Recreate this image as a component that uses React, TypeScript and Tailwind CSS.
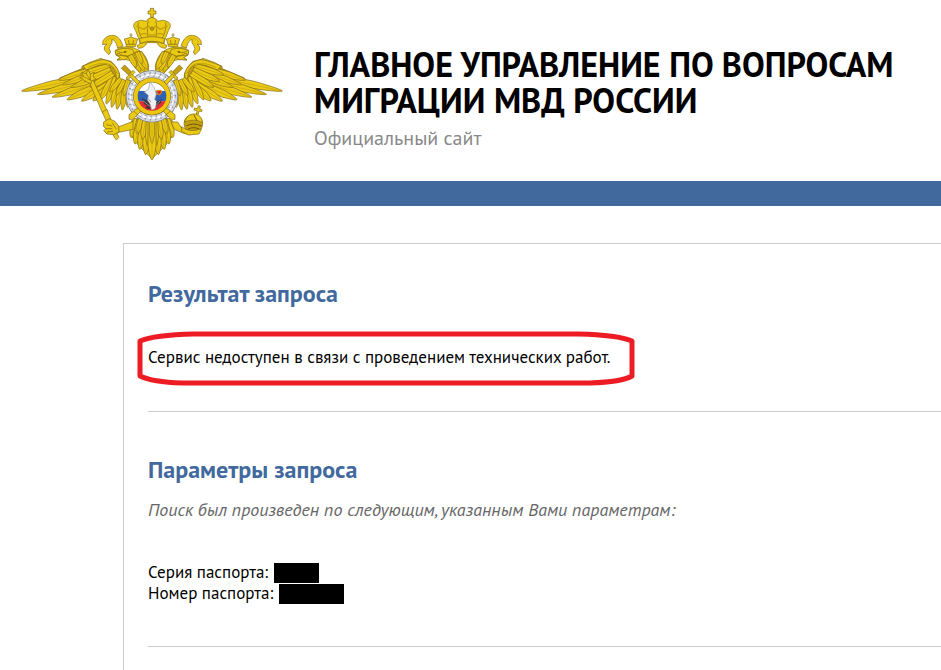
import type { ReactNode } from 'react';

const GOLD = '#ebca14';
const GOLD_DARK = '#c4a00e';
const INK = '#7d6716';

type Feather = [number, number, number, number, number];

// base x, base y, tip x, tip y, width
const primaries: Feather[] = [
  [262, 222, 20, 273, 22],
  [264, 234, 68, 283, 21],
  [266, 244, 112, 291, 21],
  [270, 250, 156, 299, 21],
  [278, 254, 200, 303, 20],
  [286, 256, 234, 302, 20],
];

const coverts: Feather[] = [
  [272, 200, 130, 240, 20],
  [274, 210, 142, 254, 18],
  [278, 220, 168, 262, 18],
  [262, 182, 202, 204, 16],
  [284, 198, 196, 224, 18],
  [288, 210, 208, 244, 18],
  [294, 220, 226, 262, 18],
];

const secondaries: Feather[] = [
  [296, 228, 256, 300, 18],
  [304, 232, 274, 312, 18],
  [312, 238, 290, 322, 18],
  [322, 242, 306, 328, 18],
  [332, 246, 322, 330, 17],
  [344, 250, 338, 322, 16],
  [318, 236, 284, 276, 14],
  [328, 240, 304, 286, 14],
  [340, 240, 326, 288, 14],
];

const tail: Feather[] = [
  [368, 358, 348, 412, 22],
  [376, 360, 360, 432, 22],
  [388, 362, 374, 448, 22],
  [398, 366, 392, 464, 22],
  [378, 356, 366, 402, 16],
  [392, 358, 382, 418, 17],
  [402, 360, 398, 436, 16],
];

const neck: Feather[] = [
  [352, 162, 376, 216, 18],
  [364, 156, 388, 214, 18],
  [372, 158, 398, 208, 18],
  [344, 164, 364, 202, 15],
  [366, 156, 382, 192, 14],
];

function featherPath([x1, y1, x2, y2, w]: Feather) {
  const len = Math.hypot(x2 - x1, y2 - y1);
  const nx = (-(y2 - y1) / len) * (w / 2);
  const ny = ((x2 - x1) / len) * (w / 2);
  const mx = x1 + (x2 - x1) * 0.65;
  const my = y1 + (y2 - y1) * 0.65;
  return `M${x1 + nx} ${y1 + ny}L${mx + nx} ${my + ny}Q${x2 + nx * 0.4} ${y2 + ny * 0.4} ${x2} ${y2}Q${x2 - nx * 0.4} ${y2 - ny * 0.4} ${mx - nx} ${my - ny}L${x1 - nx} ${y1 - ny}Z`;
}

function Feathers({ items }: { items: Feather[] }) {
  return (
    <>
      {items.map((f) => (
        <g key={f.join()}>
          <path d={featherPath(f)} fill={GOLD} stroke={INK} strokeWidth="2" />
          <path d={`M${f[0]} ${f[1]}L${f[2]} ${f[3]}`} stroke={GOLD_DARK} strokeWidth="2" />
        </g>
      ))}
    </>
  );
}

function Wing() {
  return (
    <g>
      <path
        d="M262 178L202 198L200 206L134 234L128 242L205 262L290 280L345 300L345 240L314 244L314 222L303 200L288 184Z"
        fill={GOLD_DARK}
        stroke={INK}
        strokeWidth="2"
      />
      <Feathers items={primaries} />
      <Feathers items={secondaries} />
      <Feathers items={coverts} />
      <path
        d="M204 198Q240 182 262 179Q288 180 300 198Q316 212 312 234L304 236Q304 212 290 200Q276 190 252 196L214 210Z"
        fill={GOLD}
        stroke={INK}
        strokeWidth="2"
      />
      <path d="M220 202Q262 182 286 194Q302 204 308 222" fill="none" stroke={GOLD_DARK} strokeWidth="3" />
    </g>
  );
}

function Head() {
  return (
    <g stroke={INK} strokeWidth="2" strokeLinejoin="round">
      {/* ribbon */}
      <path
        d="M324 138Q316 112 300 107Q278 102 264 122L263 134L276 132Q264 140 268 150L282 164L287 156Q278 146 286 136Q295 126 290 119Q302 118 308 144Z"
        fill={GOLD}
      />
      <path d="M270 126Q284 108 304 116" fill="none" stroke={GOLD_DARK} />
      {/* head and neck */}
      <path
        d="M378 222Q358 206 348 182L326 178L306 180L316 172L304 164L300 152L312 144Q340 136 362 146Q388 156 396 180Q404 196 400 214Z"
        fill={GOLD}
      />
      <Feathers items={neck} />
      <path d="M301 153Q322 140 352 148L358 160L338 168L322 166L312 160L302 164Z" fill={GOLD} />
      <path d="M303 165L322 167L340 170L330 179L306 180L316 173Z" fill={GOLD} />
      <path d="M306 155L322 158L336 154" fill="none" />
      <circle cx="330" cy="156" r="2" fill="#3d320c" />
      {/* small crown */}
      <path d="M335 140L328 117L340 114L348 110L356 114L368 117L361 140Z" fill={GOLD} />
      <path d="M348 110V99M343 105H353M340 120L343 134M356 120L353 134M334 133H362" fill="none" />
    </g>
  );
}

function Mirrored({ children }: { children: ReactNode }) {
  return (
    <>
      {children}
      <g transform="translate(822 0) scale(-1 1)">{children}</g>
    </>
  );
}

function Sword() {
  return (
    <g stroke={INK} strokeWidth="2">
      <path d="M319 205L329 195L349 215L340 224Z" fill={GOLD_DARK} />
      <path d="M333 234L354 211L360 217L340 238Z" fill={GOLD} />
      <path d="M350 222L375 246L368 254L344 229Z" fill={GOLD} />
      <path d="M342 344L374 319L383 328L354 358L342 358Z" fill={GOLD} />
      <path d="M357 334L370 346" fill="none" />
    </g>
  );
}

function Emblem() {
  return (
    <svg viewBox="0 0 825 510" role="img" aria-label="Герб МВД России" className="w-[275px] shrink-0">
      <Mirrored>
        <Wing />
        <Head />
      </Mirrored>

      {/* ribbon ties and the main crown */}
      <g stroke={INK} strokeWidth="2" strokeLinejoin="round">
        <path d="M374 116Q380 132 366 137L370 145Q390 144 396 128H426Q432 144 452 145L456 137Q442 132 448 116Z" fill={GOLD} />
        <path d="M374 124L362 92Q350 74 362 66Q376 56 394 64Q398 54 411 52Q424 54 428 64Q446 56 460 66Q472 74 460 92L448 124L446 130Q411 118 376 130Z" fill={GOLD} />
        <path d="M400 118Q394 82 400 62M422 118Q428 82 422 62M382 118Q366 90 370 68M440 118Q456 90 452 68" fill="none" />
        <path d="M364 78L386 88L400 78L411 88L422 78L436 88L458 78M374 104L388 100L411 106L434 100L448 104" fill="none" stroke={GOLD_DARK} strokeWidth="4" />
        <path d="M373 116Q411 104 449 116L446 130Q411 118 376 130Z" fill={GOLD} />
        <circle cx="411" cy="86" r="5" fill={GOLD_DARK} />
        <path d="M407 52V42H399V33H406V25H416V33H423V42H415V52Z" fill={GOLD} />
      </g>

      {/* tail */}
      <path d="M350 362Q411 336 472 362L474 406L448 440L411 476L374 440L348 406Z" fill={GOLD} stroke={INK} strokeWidth="2" />
      <Mirrored>
        <Feathers items={tail} />
      </Mirrored>
      <Feathers items={[[411, 364, 411, 480, 24], [411, 358, 411, 430, 14]]} />

      {/* arms, sceptre and orb */}
      <g stroke={INK} strokeWidth="2" strokeLinejoin="round">
        <path d="M354 364L312 380L300 374L306 398L354 388Z" fill={GOLD} />
        <path d="M468 366L478 388L506 400L526 404L522 394L500 384L488 366Z" fill={GOLD} />
        <path d="M220 240L232 235L277 334L263 340Z" fill={GOLD} />
        <path d="M262 336L276 328L282 344L288 358L274 364Z" fill={GOLD} />
        <path d="M274 362L286 358L312 412L304 420L298 412Z" fill={GOLD} />
        <path d="M266 366L282 356L300 364L311 378L312 396L296 404L276 402L266 392L272 386L265 378Z" fill={GOLD} />
        <path d="M274 374L292 378M272 386L292 386M276 396L294 394M292 368L304 388" fill="none" />
        <path d="M212 244L194 232L206 230L200 216L214 222L218 208L226 222L238 216L234 230L244 238L230 242L228 252Z" fill={GOLD} />
        <path d="M206 230L228 242M214 222L226 240M226 222L226 240" fill="none" />
        <circle cx="535" cy="371" r="28" fill={GOLD_DARK} />
        <path d="M508 366Q520 338 542 342Q562 348 562 368Q540 354 508 366Z" fill={GOLD} />
        <path d="M514 378Q534 366 560 378M518 388Q536 378 554 388M536 344L546 362" fill="none" stroke="#6b5710" strokeWidth="3" />
        <path d="M500 380Q524 400 560 386L552 402L520 405L500 394Z" fill={GOLD} />
        <path d="M544 342L546 332L537 330L538 324L547 326L550 317L556 319L554 327L561 329L560 335L552 333L550 343Z" fill={GOLD} />
      </g>

      {/* wreath, swords and the shield */}
      <circle cx="411" cy="289" r="65" fill="none" stroke="#777d88" strokeWidth="26" />
      <circle cx="411" cy="289" r="65" fill="none" stroke="#d5d9e2" strokeWidth="22" />
      <circle cx="411" cy="289" r="70" fill="none" stroke="#8e949f" strokeWidth="5" strokeDasharray="4 12" />
      <circle cx="411" cy="289" r="61" fill="none" stroke="#9aa1ad" strokeWidth="5" strokeDasharray="5 11" />
      <circle cx="411" cy="289" r="65" fill="none" stroke="#ffffff" strokeWidth="5" strokeDasharray="10 5" />
      <Mirrored>
        <Sword />
      </Mirrored>
      <circle cx="411" cy="289" r="49" fill="#ffffff" stroke={INK} strokeWidth="15" />
      <path d="M367 273H455V304H367Z" fill="#2f62b3" />
      <path d="M369 304H453Q441 333 411 334Q381 333 369 304Z" fill="#e32b36" />
      <circle cx="411" cy="289" r="49" fill="none" stroke="#edc60e" strokeWidth="12" />
      {/* horseman */}
      <path
        d="M406 244L412 256L418 264L424 282L419 298L426 306L420 326L410 330L406 314L398 300L400 286L388 276L400 268Z"
        fill="#eef0f3"
        stroke="#9a9ea8"
        strokeWidth="2"
      />
      <path
        d="M380 294L396 302L404 312L402 320L388 312ZM424 306L440 296L438 308L424 318ZM392 318L406 322L404 328L394 325Z"
        fill="#34363e"
      />
      <path d="M384 302L404 318M424 316L436 302M400 296L408 306" stroke="#8f9698" strokeWidth="3" />
      <path d="M425 271H439V280Q433 288 427 282Z" fill="#e0202b" stroke="#dd9c16" strokeWidth="3" />
    </svg>
  );
}

function Header() {
  return (
    <header className="flex h-[181px] items-start pl-[15px]">
      <Emblem />
      <div className="pl-6 pt-[46px]">
        <h1 className="max-w-[600px] text-[34px] font-bold leading-9 text-black">
          ГЛАВНОЕ УПРАВЛЕНИЕ ПО ВОПРОСАМ МИГРАЦИИ МВД РОССИИ
        </h1>
        <p className="mt-1.5 text-xl leading-7 text-[#888888]">Официальный сайт</p>
      </div>
    </header>
  );
}

function Notice({ children }: { children: ReactNode }) {
  return (
    <div className="relative w-fit">
      <p className="text-[17px] leading-[21px] text-black">{children}</p>
      <svg
        viewBox="0 0 500 56"
        className="absolute -left-3 -top-4 h-14 w-[500px] max-w-none"
        aria-hidden="true"
      >
        <path
          d="M4 10Q18 4 58 3H442Q482 4 496 10V45Q486 51 454 52H46Q16 51 4 45Z"
          fill="none"
          stroke="#ed1c24"
          strokeWidth="5"
          strokeLinejoin="round"
        />
      </svg>
    </div>
  );
}

const params = [
  { label: 'Серия паспорта:', mask: 'w-[45px]' },
  { label: 'Номер паспорта:', mask: 'w-[65px]' },
];

export default function App() {
  return (
    <div className="min-h-screen overflow-hidden bg-white font-['PT_Sans','Noto_Sans',sans-serif]">
      <Header />
      <div className="h-[25px] bg-[#42699e]" />

      <main className="ml-[123px] mt-[37px] border-l border-t border-[#cccccc] pb-10 pl-6">
        <section className="border-b border-[#cccccc] pb-[43px] pt-[34px]">
          <h2 className="text-2xl font-bold text-[#42699e]">Результат запроса</h2>
          <div className="mt-[37px]">
            <Notice>Сервис недоступен в связи с проведением технических работ.</Notice>
          </div>
        </section>

        <section className="border-b border-[#cccccc] pb-[42px] pt-[42px]">
          <h2 className="text-2xl font-bold text-[#42699e]">Параметры запроса</h2>
          <p className="mt-3 text-lg italic leading-6 text-[#666666]">
            Поиск был произведен по следующим, указанным Вами параметрам:
          </p>
          <dl className="mt-10 text-[17px] leading-[21px]">
            {params.map((param) => (
              <div key={param.label} className="flex items-center gap-1.5">
                <dt className="text-black">{param.label}</dt>
                <dd className={`h-5 bg-black ${param.mask}`} />
              </div>
            ))}
          </dl>
        </section>
      </main>
    </div>
  );
}
